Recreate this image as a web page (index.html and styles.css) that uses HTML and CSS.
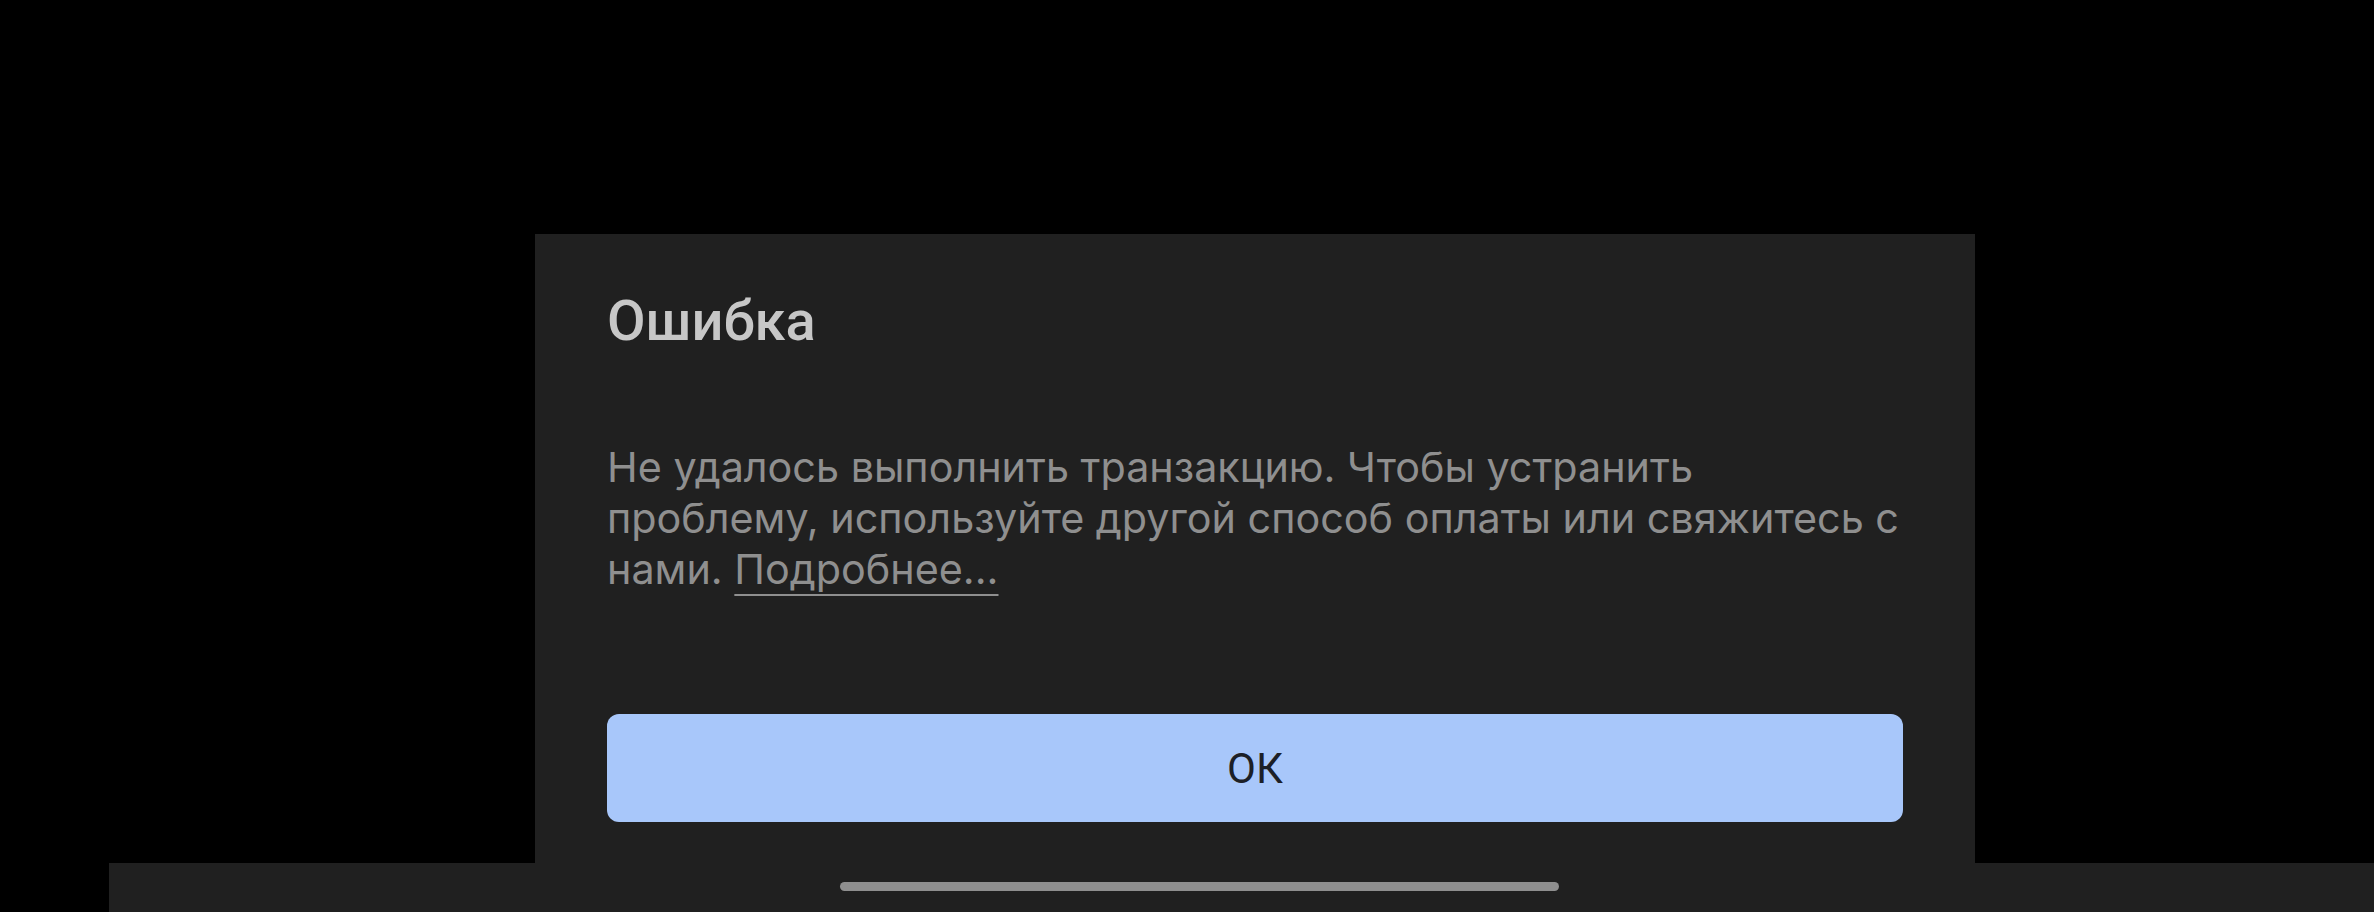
FILE: index.html
```html
<!DOCTYPE html>
<html lang="ru">
<head>
<meta charset="utf-8">
<title>Ошибка</title>
<link rel="stylesheet" href="styles.css">
</head>
<body>
<div class="screen">
  <div class="dialog">
    <h1 class="title">Ошибка</h1>
    <p class="message">Не удалось выполнить транзакцию. Чтобы устранить проблему, используйте другой способ оплаты или свяжитесь с нами. <a class="more" href="#">Подробнее...</a></p>
    <button class="ok">ОК</button>
  </div>
  <div class="navbar"><div class="handle"></div></div>
</div>
</body>
</html>
```

FILE: styles.css
```css
html, body {
  margin: 0;
  padding: 0;
  background: #000;
  width: 2374px;
  height: 912px;
  overflow: hidden;
}
.screen {
  display: flex;
  flex-direction: column;
  padding-top: 234px;
  height: 912px;
  box-sizing: border-box;
}
.dialog {
  margin-left: 535px;
  width: 1440px;
  height: 629px;
  box-sizing: border-box;
  background: #202020;
  padding: 55px 72px 0 72px;
  display: flex;
  flex-direction: column;
}
.title {
  margin: 0;
  font-family: Roboto, "Noto Sans", sans-serif;
  font-weight: 500;
  font-size: 56px;
  line-height: 64px;
  color: #c7c7c7;
}
.message {
  margin: 89px -6px 0 0;
  font-family: Inter, "Noto Sans", sans-serif;
  font-size: 41.3px;
  line-height: 51px;
  color: #8f8f8f;
}
.more {
  color: #8f8f8f;
  text-decoration: underline;
  text-decoration-thickness: 2px;
  text-underline-offset: 10px;
}
.ok {
  margin-top: 119px;
  height: 108px;
  width: 100%;
  border: none;
  border-radius: 12px;
  background: #a8c7fa;
  color: #1c2027;
  font-family: Roboto, "Noto Sans", sans-serif;
  font-weight: 400;
  font-size: 42px;
  padding: 0;
}
.navbar {
  margin-left: 109px;
  height: 49px;
  background: #202020;
  padding: 19px 0 0 731px;
  box-sizing: border-box;
}
.handle {
  width: 719px;
  height: 9px;
  border-radius: 5px;
  background: #8f8f8f;
}
```
